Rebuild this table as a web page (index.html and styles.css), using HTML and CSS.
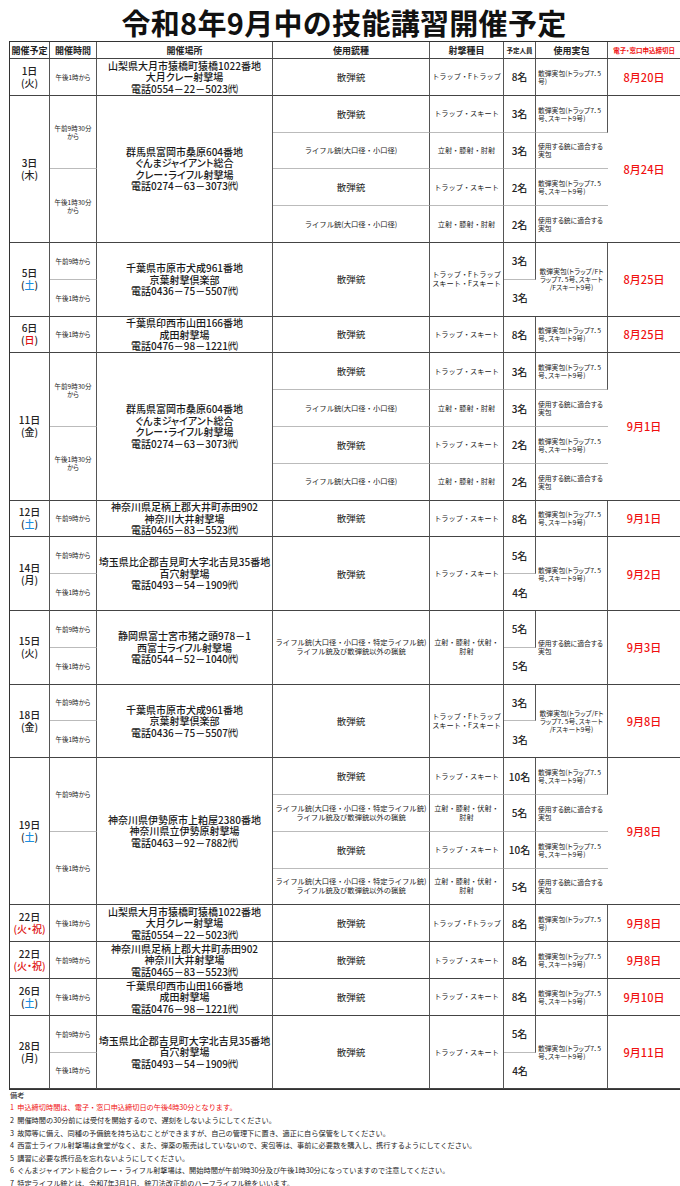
FILE: index.html
```html
<!DOCTYPE html>
<html lang="ja">
<head>
<meta charset="utf-8">
<title>令和8年9月中の技能講習開催予定</title>
<link rel="stylesheet" href="styles.css">
</head>
<body>
<h1 class="title">令和8年9月中の技能講習開催予定</h1>
<table class="sched">
<colgroup>
<col class="c1"><col class="c2"><col class="c3"><col class="c4"><col class="c5"><col class="c6"><col class="c7"><col class="c8">
</colgroup>
<thead>
<tr class="hd">
<th>開催予定</th><th>開催時間</th><th>開催場所</th><th>使用銃種</th><th>射撃種目</th><th class="small">予定人員</th><th>使用実包</th><th class="small red">電子・窓口申込締切日</th>
</tr>
</thead>
<tbody>
<!-- 1日 -->
<tr class="u">
<td class="d">1日<br>(火)</td><td class="t">午後1時から</td>
<td class="loc">山梨県大月市猿橋町猿橋1022番地<br>大月クレー射撃場<br>電話0554－22－5023㈹</td>
<td class="gun">散弾銃</td><td class="ev">トラップ・Fトラップ</td><td class="n">8名</td>
<td class="am">散弾実包(トラップ7．5<br>号)</td><td class="due">8月20日</td>
</tr>
<!-- 3日 -->
<tr class="u">
<td class="d" rowspan="4">3日<br>(木)</td><td class="t in" rowspan="2">午前9時30分<br>から</td>
<td class="loc" rowspan="4">群馬県富岡市桑原604番地<br>ぐんまジャイアント総合<br>クレー・ライフル射撃場<br>電話0274－63－3073㈹</td>
<td class="gun in">散弾銃</td><td class="ev in">トラップ・スキート</td><td class="n in">3名</td>
<td class="am in">散弾実包(トラップ7．5<br>号、スキート9号)</td><td class="due" rowspan="4">8月24日</td>
</tr>
<tr class="u">
<td class="gun sm in">ライフル銃(大口径・小口径)</td><td class="ev in">立射・膝射・肘射</td><td class="n in">3名</td>
<td class="am in">使用する銃に適合する<br>実包</td>
</tr>
<tr class="u">
<td class="t" rowspan="2">午後1時30分<br>から</td>
<td class="gun in">散弾銃</td><td class="ev in">トラップ・スキート</td><td class="n in">2名</td>
<td class="am in">散弾実包(トラップ7．5<br>号、スキート9号)</td>
</tr>
<tr class="u">
<td class="gun sm">ライフル銃(大口径・小口径)</td><td class="ev">立射・膝射・肘射</td><td class="n">2名</td>
<td class="am">使用する銃に適合する<br>実包</td>
</tr>
<!-- 5日 -->
<tr class="u">
<td class="d" rowspan="2">5日<br>(<span class="sat">土</span>)</td><td class="t in">午前9時から</td>
<td class="loc" rowspan="2">千葉県市原市犬成961番地<br>京葉射撃倶楽部<br>電話0436－75－5507㈹</td>
<td class="gun" rowspan="2">散弾銃</td><td class="ev" rowspan="2">トラップ・Fトラップ<br>スキート・Fスキート</td><td class="n in">3名</td>
<td class="am ctr" rowspan="2">散弾実包(トラップ/Fト<br>ラップ7．5号、スキート<br>/Fスキート9号)</td><td class="due" rowspan="2">8月25日</td>
</tr>
<tr class="u">
<td class="t">午後1時から</td><td class="n">3名</td>
</tr>
<!-- 6日 -->
<tr class="u">
<td class="d">6日<br>(<span class="hol">日</span>)</td><td class="t">午後1時から</td>
<td class="loc">千葉県印西市山田166番地<br>成田射撃場<br>電話0476－98－1221㈹</td>
<td class="gun">散弾銃</td><td class="ev">トラップ・スキート</td><td class="n">8名</td>
<td class="am">散弾実包(トラップ7．5<br>号、スキート9号)</td><td class="due">8月25日</td>
</tr>
<!-- 11日 -->
<tr class="u">
<td class="d" rowspan="4">11日<br>(金)</td><td class="t in" rowspan="2">午前9時30分<br>から</td>
<td class="loc" rowspan="4">群馬県富岡市桑原604番地<br>ぐんまジャイアント総合<br>クレー・ライフル射撃場<br>電話0274－63－3073㈹</td>
<td class="gun in">散弾銃</td><td class="ev in">トラップ・スキート</td><td class="n in">3名</td>
<td class="am in">散弾実包(トラップ7．5<br>号、スキート9号)</td><td class="due" rowspan="4">9月1日</td>
</tr>
<tr class="u">
<td class="gun sm in">ライフル銃(大口径・小口径)</td><td class="ev in">立射・膝射・肘射</td><td class="n in">3名</td>
<td class="am in">使用する銃に適合する<br>実包</td>
</tr>
<tr class="u">
<td class="t" rowspan="2">午後1時30分<br>から</td>
<td class="gun in">散弾銃</td><td class="ev in">トラップ・スキート</td><td class="n in">2名</td>
<td class="am in">散弾実包(トラップ7．5<br>号、スキート9号)</td>
</tr>
<tr class="u">
<td class="gun sm">ライフル銃(大口径・小口径)</td><td class="ev">立射・膝射・肘射</td><td class="n">2名</td>
<td class="am">使用する銃に適合する<br>実包</td>
</tr>
<!-- 12日 -->
<tr class="u">
<td class="d">12日<br>(<span class="sat">土</span>)</td><td class="t">午前9時から</td>
<td class="loc">神奈川県足柄上郡大井町赤田902<br>神奈川大井射撃場<br>電話0465－83－5523㈹</td>
<td class="gun">散弾銃</td><td class="ev">トラップ・スキート</td><td class="n">8名</td>
<td class="am">散弾実包(トラップ7．5<br>号、スキート9号)</td><td class="due">9月1日</td>
</tr>
<!-- 14日 -->
<tr class="u">
<td class="d" rowspan="2">14日<br>(月)</td><td class="t in">午前9時から</td>
<td class="loc" rowspan="2">埼玉県比企郡吉見町大字北吉見35番地<br>百穴射撃場<br>電話0493－54－1909㈹</td>
<td class="gun" rowspan="2">散弾銃</td><td class="ev" rowspan="2">トラップ・スキート</td><td class="n in">5名</td>
<td class="am" rowspan="2">散弾実包(トラップ7．5<br>号、スキート9号)</td><td class="due" rowspan="2">9月2日</td>
</tr>
<tr class="u">
<td class="t">午後1時から</td><td class="n">4名</td>
</tr>
<!-- 15日 -->
<tr class="u">
<td class="d" rowspan="2">15日<br>(火)</td><td class="t in">午前9時から</td>
<td class="loc" rowspan="2">静岡県富士宮市猪之頭978－1<br>西富士ライフル射撃場<br>電話0544－52－1040㈹</td>
<td class="gun sm" rowspan="2">ライフル銃(大口径・小口径・特定ライフル銃)<br>ライフル銃及び散弾銃以外の猟銃</td><td class="ev" rowspan="2">立射・膝射・伏射・<br>肘射</td><td class="n in">5名</td>
<td class="am" rowspan="2">使用する銃に適合する<br>実包</td><td class="due" rowspan="2">9月3日</td>
</tr>
<tr class="u">
<td class="t">午後1時から</td><td class="n">5名</td>
</tr>
<!-- 18日 -->
<tr class="u">
<td class="d" rowspan="2">18日<br>(金)</td><td class="t in">午前9時から</td>
<td class="loc" rowspan="2">千葉県市原市犬成961番地<br>京葉射撃倶楽部<br>電話0436－75－5507㈹</td>
<td class="gun" rowspan="2">散弾銃</td><td class="ev" rowspan="2">トラップ・Fトラップ<br>スキート・Fスキート</td><td class="n in">3名</td>
<td class="am ctr" rowspan="2">散弾実包(トラップ/Fト<br>ラップ7．5号、スキート<br>/Fスキート9号)</td><td class="due" rowspan="2">9月8日</td>
</tr>
<tr class="u">
<td class="t">午後1時から</td><td class="n">3名</td>
</tr>
<!-- 19日 -->
<tr class="u">
<td class="d" rowspan="4">19日<br>(<span class="sat">土</span>)</td><td class="t in" rowspan="2">午前9時から</td>
<td class="loc" rowspan="4">神奈川県伊勢原市上粕屋2380番地<br>神奈川県立伊勢原射撃場<br>電話0463－92－7882㈹</td>
<td class="gun in">散弾銃</td><td class="ev in">トラップ・スキート</td><td class="n in">10名</td>
<td class="am in">散弾実包(トラップ7．5<br>号、スキート9号)</td><td class="due" rowspan="4">9月8日</td>
</tr>
<tr class="u">
<td class="gun sm in">ライフル銃(大口径・小口径・特定ライフル銃)<br>ライフル銃及び散弾銃以外の猟銃</td><td class="ev in">立射・膝射・伏射・<br>肘射</td><td class="n in">5名</td>
<td class="am in">使用する銃に適合する<br>実包</td>
</tr>
<tr class="u">
<td class="t" rowspan="2">午後1時から</td>
<td class="gun in">散弾銃</td><td class="ev in">トラップ・スキート</td><td class="n in">10名</td>
<td class="am in">散弾実包(トラップ7．5<br>号、スキート9号)</td>
</tr>
<tr class="u">
<td class="gun sm">ライフル銃(大口径・小口径・特定ライフル銃)<br>ライフル銃及び散弾銃以外の猟銃</td><td class="ev">立射・膝射・伏射・<br>肘射</td><td class="n">5名</td>
<td class="am">使用する銃に適合する<br>実包</td>
</tr>
<!-- 22日 -->
<tr class="u">
<td class="d">22日<br><span class="hol">(火・祝)</span></td><td class="t">午後1時から</td>
<td class="loc">山梨県大月市猿橋町猿橋1022番地<br>大月クレー射撃場<br>電話0554－22－5023㈹</td>
<td class="gun">散弾銃</td><td class="ev">トラップ・Fトラップ</td><td class="n">8名</td>
<td class="am">散弾実包(トラップ7．5<br>号)</td><td class="due">9月8日</td>
</tr>
<!-- 22日 -->
<tr class="u">
<td class="d">22日<br><span class="hol">(火・祝)</span></td><td class="t">午前9時から</td>
<td class="loc">神奈川県足柄上郡大井町赤田902<br>神奈川大井射撃場<br>電話0465－83－5523㈹</td>
<td class="gun">散弾銃</td><td class="ev">トラップ・スキート</td><td class="n">8名</td>
<td class="am">散弾実包(トラップ7．5<br>号、スキート9号)</td><td class="due">9月8日</td>
</tr>
<!-- 26日 -->
<tr class="u">
<td class="d">26日<br>(<span class="sat">土</span>)</td><td class="t">午後1時から</td>
<td class="loc">千葉県印西市山田166番地<br>成田射撃場<br>電話0476－98－1221㈹</td>
<td class="gun">散弾銃</td><td class="ev">トラップ・スキート</td><td class="n">8名</td>
<td class="am">散弾実包(トラップ7．5<br>号、スキート9号)</td><td class="due">9月10日</td>
</tr>
<!-- 28日 -->
<tr class="u">
<td class="d" rowspan="2">28日<br>(月)</td><td class="t in">午前9時から</td>
<td class="loc" rowspan="2">埼玉県比企郡吉見町大字北吉見35番地<br>百穴射撃場<br>電話0493－54－1909㈹</td>
<td class="gun" rowspan="2">散弾銃</td><td class="ev" rowspan="2">トラップ・スキート</td><td class="n in">5名</td>
<td class="am" rowspan="2">散弾実包(トラップ7．5<br>号、スキート9号)</td><td class="due" rowspan="2">9月11日</td>
</tr>
<tr class="u">
<td class="t">午後1時から</td><td class="n">4名</td>
</tr>
</tbody>
</table>
<div class="notes">
<p class="nh">備考</p>
<p class="red">1&nbsp; 申込締切時間は、電子・窓口申込締切日の午後4時30分となります。</p>
<p>2&nbsp; 開催時間の30分前には受付を開始するので、遅刻をしないようにしてください。</p>
<p>3&nbsp; 故障等に備え、同種の予備銃を持ち込むことができますが、自己の管理下に置き、適正に自ら保管をしてください。</p>
<p>4&nbsp; 西富士ライフル射撃場は食堂がなく、また、弾薬の販売はしていないので、実包等は、事前に必要数を購入し、携行するようにしてください。</p>
<p>5&nbsp; 講習に必要な携行品を忘れないようにしてください。</p>
<p>6&nbsp; ぐんまジャイアント総合クレー・ライフル射撃場は、開始時間が午前9時30分及び午後1時30分になっていますので注意してください。</p>
<p>7&nbsp; 特定ライフル銃とは、令和7年3月1日、銃刀法改正前のハーフライフル銃をいいます。</p>
</div>
</body>
</html>
```
FILE: styles.css
```css
html, body {
  margin: 0;
  padding: 0;
  background: #fff;
}
body {
  padding-left: 9px;
  font-family: "Noto Sans CJK JP", "Liberation Sans", sans-serif;
  color: #222;
  font-feature-settings: "palt" 1;
}
.title {
  margin: 0;
  width: 670px;
  height: 41px;
  font-size: 29px;
  line-height: 44px;
  font-weight: bold;
  text-align: center;
  color: #111;
  letter-spacing: 0.3px;
  font-feature-settings: normal;
}
.sched {
  border-collapse: separate;
  border-spacing: 0;
  table-layout: fixed;
  width: 671px;
  border: 1px solid #333;
}
.c1 { width: 40px; }
.c2 { width: 47px; }
.c3 { width: 176px; }
.c4 { width: 157px; }
.c5 { width: 74px; }
.c6 { width: 32px; }
.c7 { width: 72px; }
.c8 { width: 72px; }
.sched th, .sched td {
  border-right: 1px solid #555;
  border-bottom: 1px solid #444;
  padding: 0;
  text-align: center;
  vertical-align: middle;
  overflow: hidden;
  white-space: nowrap;
}
.sched tr > :last-child { border-right: none; }
.sched tr.hd { height: 17px; }
.sched tr.hd th {
  font-size: 9px;
  line-height: 11px;
  font-weight: bold;
  color: #222;
}
.sched tr.hd th.small { font-size: 6.5px; }
.sched tr.u { height: 36.8px; }
.sched td.in { border-bottom-color: #bbb; }
.d {
  font-size: 10px;
  line-height: 12px;
  font-weight: 500;
  color: #222;
}
.t {
  font-size: 6.5px;
  line-height: 8px;
  color: #222;
}
.loc {
  font-size: 10px;
  line-height: 11.5px;
  font-weight: 500;
  color: #1a1a1a;
}
.gun {
  font-size: 9.5px;
  line-height: 10px;
  font-feature-settings: normal;
}
.gun.sm {
  font-size: 7.3px;
  line-height: 9px;
}
.ev {
  font-size: 7.2px;
  line-height: 9px;
  font-feature-settings: normal;
}
.n {
  font-size: 10px;
  line-height: 11px;
  font-weight: 500;
}
.am {
  text-align: left !important;
  font-size: 6.8px;
  line-height: 8px;
  padding-left: 2px !important;
}
.am.ctr {
  text-align: center !important;
  padding-left: 0 !important;
}
.due {
  font-size: 11px;
  line-height: 12px;
  font-weight: 500;
  color: #f01010;
}
.red { color: #f01010 !important; }
.sat { color: #1a8fe0; }
.hol { color: #e01010; }
.notes {
  padding-top: 0;
  padding-left: 1px;
  font-size: 7.2px;
  line-height: 12.6px;
  color: #222;
  font-feature-settings: normal;
}
.notes p {
  margin: 0;
  white-space: nowrap;
}
.notes .nh { line-height: 11px; }
```
